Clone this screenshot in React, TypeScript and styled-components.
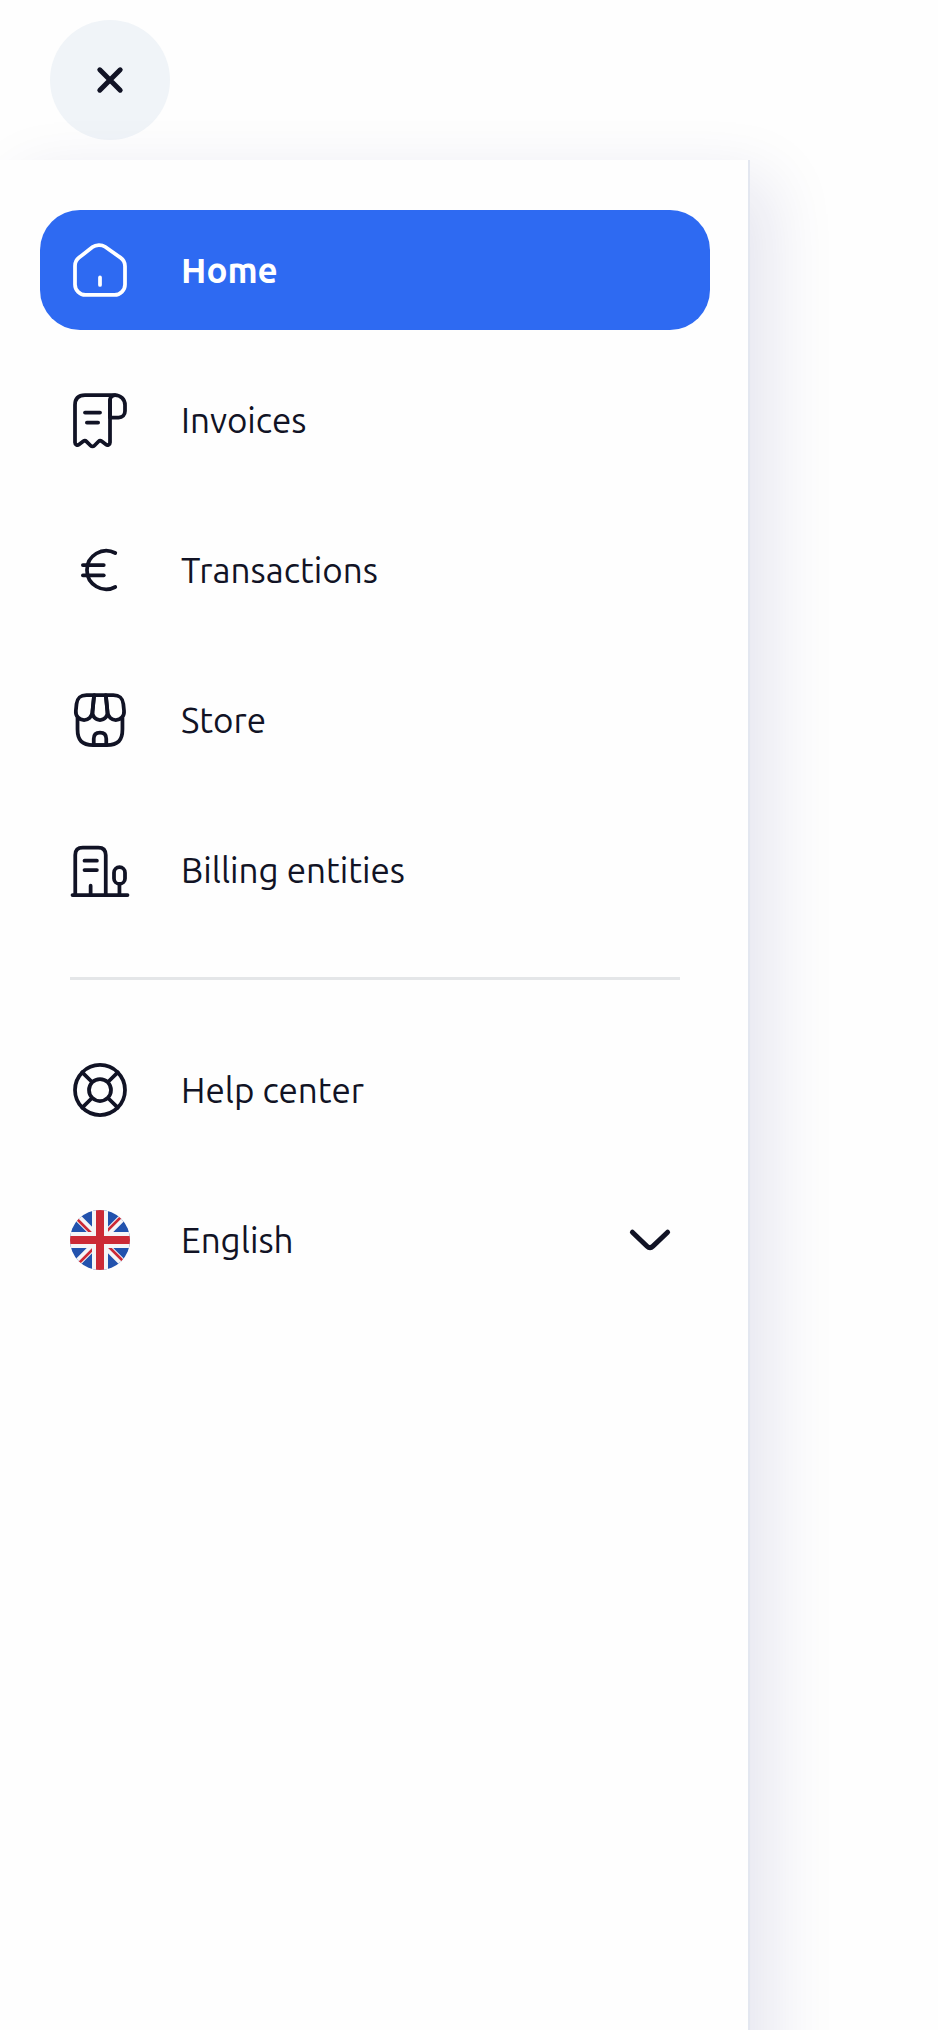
import React from 'react';
import styled, { createGlobalStyle, css } from 'styled-components';

const ink = '#111325';

const GlobalStyle = createGlobalStyle`
  *, *::before, *::after { box-sizing: border-box; }
  body {
    margin: 0;
    background: #fefefe;
    color: ${ink};
    font-family: Ubuntu, "Noto Sans", "Open Sans", sans-serif;
  }
`;

const Page = styled.div`
  display: flex;
  flex-direction: column;
  min-height: 100vh;
  overflow: hidden;
`;

const TopBar = styled.header`
  padding: 20px 50px;
`;

const CloseButton = styled.button`
  display: flex;
  align-items: center;
  justify-content: center;
  width: 120px;
  height: 120px;
  padding: 0;
  border: 0;
  border-radius: 50%;
  background: #f0f4f8;
  color: ${ink};
  cursor: pointer;
`;

/* Runs past the bottom of the window so that its shadow stays even down the edge. */
const Drawer = styled.nav`
  flex: 1;
  width: 80%;
  margin-bottom: -60px;
  padding: 50px 38px 110px 40px;
  border-right: 2px solid #e3e7f0;
  background: #fefefe;
  box-shadow: 20px 20px 64px rgba(15, 20, 110, 0.11);
`;

const List = styled.ul`
  display: flex;
  flex-direction: column;
  gap: 30px;
  margin: 0;
  padding: 0;
  list-style: none;
`;

const rowStyle = css`
  display: flex;
  align-items: center;
  gap: 51px;
  width: 100%;
  height: 120px;
  padding: 0 30px;
  border: 0;
  border-radius: 40px;
  font: inherit;
  font-size: 35px;
  line-height: 48px;
  text-align: left;
  text-decoration: none;
`;

const NavLink = styled.a<{ $active?: boolean }>`
  ${rowStyle}
  background: ${({ $active }) => ($active ? '#2e6af2' : 'transparent')};
  color: ${({ $active }) => ($active ? '#fff' : ink)};
  font-weight: ${({ $active }) => ($active ? 700 : 400)};
`;

const LanguageButton = styled.button`
  ${rowStyle}
  background: transparent;
  color: ${ink};
  cursor: pointer;
`;

const Label = styled.span`
  flex: 1;
`;

const Divider = styled.hr`
  height: 3px;
  margin: 47px 30px 50px;
  border: 0;
  background: #e4e6e8;
`;

const Glyph = styled.svg`
  flex: none;
  width: 60px;
  height: 60px;
  fill: none;
  stroke: currentColor;
  stroke-linecap: round;
  stroke-linejoin: round;
`;

function LineIcon({ paths, children }: { paths: string[]; children?: React.ReactNode }) {
  return (
    <Glyph viewBox="0 0 24 24" strokeWidth={1.5} aria-hidden="true">
      {paths.map((d) => (
        <path key={d} d={d} />
      ))}
      {children}
    </Glyph>
  );
}

const icons = {
  home: [
    'M9.02 2.84L3.63 7.04C2.73 7.74 2 9.23 2 10.36V17.77C2 20.09 3.89 21.99 6.21 21.99H17.79C20.11 21.99 22 20.09 22 17.78V10.5C22 9.29 21.19 7.74 20.2 7.05L14.02 2.72C12.62 1.74 10.37 1.79 9.02 2.84Z',
    'M12 17.99V14.99',
  ],
  receipt: [
    'M22 6V8.42C22 10 21 11 19.42 11H16V4.01C16 2.9 16.91 2 18.02 2C19.11 2.01 20.11 2.45 20.83 3.17C21.55 3.9 22 4.9 22 6Z',
    'M2 7V21C2 21.83 2.94 22.3 3.6 21.8L5.31 20.52C5.71 20.22 6.27 20.26 6.63 20.62L8.29 22.29C8.68 22.68 9.32 22.68 9.71 22.29L11.39 20.61C11.74 20.26 12.3 20.22 12.69 20.52L14.4 21.8C15.06 22.29 16 21.82 16 21V4C16 2.9 16.9 2 18 2H6C3 2 2 3.79 2 6V7Z',
    'M6 9H12',
    'M6.75 13H11.25',
  ],
  euro: ['M18.1 5.2A7.7 7.7 0 1 0 18.1 18.8', 'M5.15 10H13.5', 'M5.15 14.1H13.5'],
  shop: [
    'M3.01 11.22V15.71C3.01 20.2 4.81 22 9.3 22H14.69C19.18 22 20.98 20.2 20.98 15.71V11.22',
    'M12 12C13.83 12 15.18 10.51 15 8.68L14.34 2H9.67L9 8.68C8.82 10.51 10.17 12 12 12Z',
    'M18.31 12C20.33 12 21.81 10.36 21.61 8.35L21.33 5.6C20.97 3 19.97 2 17.35 2H14.3L15 9.01C15.17 10.66 16.66 12 18.31 12Z',
    'M5.64 12C7.29 12 8.78 10.66 8.94 9.01L9.16 6.8L9.64 2H6.59C3.97 2 2.97 3 2.61 5.6L2.34 8.35C2.14 10.36 3.62 12 5.64 12Z',
    'M12 17C10.33 17 9.5 17.83 9.5 19.5V22H14.5V19.5C14.5 17.83 13.67 17 12 17Z',
  ],
  buildings: [
    'M1 22H23',
    'M19.78 22V17.55',
    'M19.8 10.89C18.58 10.89 17.6 11.87 17.6 13.09V15.36C17.6 16.58 18.58 17.56 19.8 17.56C21.02 17.56 22 16.58 22 15.36V13.09C22 11.87 21.02 10.89 19.8 10.89Z',
    'M2.1 22V6.03C2.1 4.02 3.1 3.01 5.09 3.01H11.32C13.31 3.01 14.3 4.02 14.3 6.03V22',
    'M5.8 8.25H10.75',
    'M5.8 12H10.75',
    'M8.25 22V18.25',
  ],
  lifebuoy: [
    'M4.9 4.93L8.7 8.7',
    'M4.9 19.07L8.7 15.3',
    'M19.1 19.07L15.3 15.3',
    'M19.1 4.93L15.3 8.7',
  ],
};

function CloseIcon() {
  return (
    <Glyph viewBox="0 0 60 60" strokeWidth={5} aria-hidden="true">
      <path d="M19.8 19.8L40.2 40.2M40.2 19.8L19.8 40.2" />
    </Glyph>
  );
}

function ChevronIcon() {
  return (
    <Glyph viewBox="0 0 60 60" strokeWidth={5} aria-hidden="true">
      <path d="M12.4 22.2L27 36.2Q30 39 33 36.2L47.6 22.2" />
    </Glyph>
  );
}

function UnitedKingdomFlag() {
  return (
    <Glyph viewBox="0 0 60 60" aria-hidden="true">
      <defs>
        <clipPath id="flag-circle">
          <circle cx="30" cy="30" r="30" />
        </clipPath>
      </defs>
      <g clipPath="url(#flag-circle)" strokeLinecap="butt">
        <rect width="60" height="60" fill="#2252ad" stroke="none" />
        <path d="M0 0L60 60M60 0L0 60" stroke="#f5f5f7" strokeWidth="7.6" />
        <path
          d="M4 6L30 32M54 4L28 30M6 56L32 30M56 54L30 28"
          stroke="#cc2a36"
          strokeWidth="2.5"
        />
        <path d="M30 0V60M0 30H60" stroke="#f5f5f7" strokeWidth="16" />
        <path d="M30 0V60M0 30H60" stroke="#cc2a36" strokeWidth="8" />
      </g>
    </Glyph>
  );
}

const mainLinks = [
  { label: 'Home', paths: icons.home, active: true },
  { label: 'Invoices', paths: icons.receipt },
  { label: 'Transactions', paths: icons.euro },
  { label: 'Store', paths: icons.shop },
  { label: 'Billing entities', paths: icons.buildings },
];

export default function App() {
  return (
    <>
      <GlobalStyle />
      <Page>
        <TopBar>
          <CloseButton type="button" aria-label="Close menu">
            <CloseIcon />
          </CloseButton>
        </TopBar>
        <Drawer aria-label="Main menu">
          <List>
            {mainLinks.map(({ label, paths, active }) => (
              <li key={label}>
                <NavLink href="#" $active={active} aria-current={active ? 'page' : undefined}>
                  <LineIcon paths={paths} />
                  <Label>{label}</Label>
                </NavLink>
              </li>
            ))}
          </List>
          <Divider />
          <List>
            <li>
              <NavLink href="#">
                <LineIcon paths={icons.lifebuoy}>
                  <circle cx="12" cy="12" r="10" />
                  <circle cx="12" cy="12" r="4.4" />
                </LineIcon>
                <Label>Help center</Label>
              </NavLink>
            </li>
            <li>
              <LanguageButton type="button" aria-haspopup="listbox">
                <UnitedKingdomFlag />
                <Label>English</Label>
                <ChevronIcon />
              </LanguageButton>
            </li>
          </List>
        </Drawer>
      </Page>
    </>
  );
}
